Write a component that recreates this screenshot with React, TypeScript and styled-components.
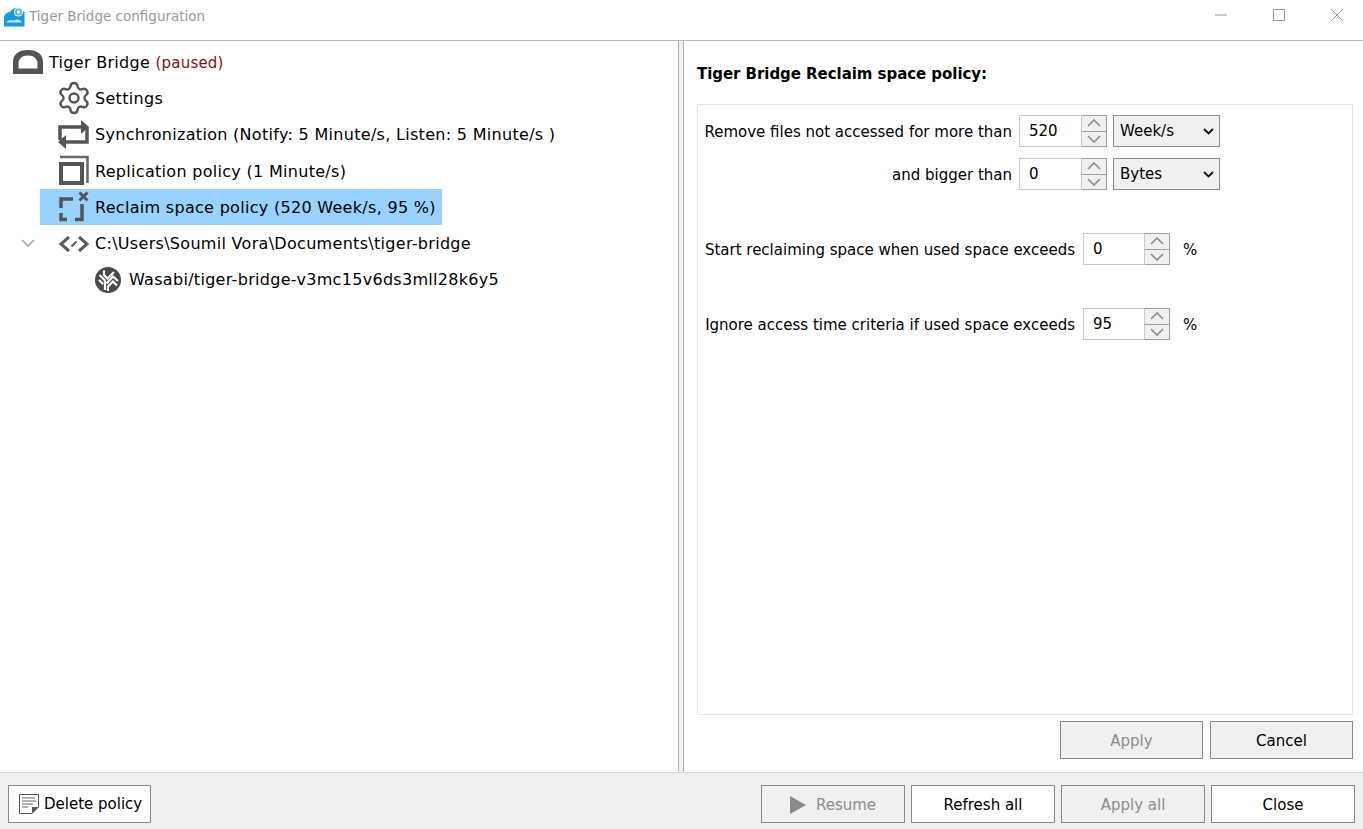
import styled, { createGlobalStyle } from "styled-components";
import { Settings } from "lucide-react";

const GlobalStyle = createGlobalStyle`
  html, body {
    margin: 0;
    padding: 0;
    background: #fff;
  }
  body {
    font-family: "DejaVu Sans", "Liberation Sans", sans-serif;
    font-size: 15px;
    color: #000;
  }
`;

function AppLogo() {
  return (
    <svg width="21" height="21" viewBox="0 0 21 21">
      <path d="M0 20.500V11C1 8 3 6 6 6C8 3 10 2 12 2L20.500 6V20.500Z" fill="#1a9ad8" />
      <path d="M2.500 16C5 13.500 7.500 13.500 9.500 14.500C12 13 15 13.500 17 15L18 16.500H2.500Z" fill="#bfe4f6" />
      <circle cx="14.500" cy="6" r="4.500" fill="#fff" />
      <circle cx="14.500" cy="6" r="2.600" fill="none" stroke="#4fb4e4" strokeWidth="1.800" />
    </svg>
  );
}

function BridgeIcon() {
  return (
    <svg width="32" height="26" viewBox="0 0 32 26">
      <path
        fillRule="evenodd"
        d="M1 25V13C1 5 7 1 16 1S31 5 31 13V25ZM6.500 19.500H25.500V14.500C25.500 10 22 6.500 16 6.500S6.500 10 6.500 14.500Z"
        fill="#545454"
      />
    </svg>
  );
}

function SyncIcon() {
  return (
    <svg width="32" height="32" viewBox="0 0 32 32" fill="none">
      <path d="M2 21V8H24" stroke="#555" strokeWidth="3.500" />
      <path d="M29 8V23H8" stroke="#555" strokeWidth="3.500" />
      <path d="M23 1L31 8L23 15Z" fill="#555" />
      <path d="M8 16L0 23L8 30Z" fill="#555" />
    </svg>
  );
}

function ReplicationIcon() {
  return (
    <svg width="32" height="32" viewBox="0 0 32 32" fill="none">
      <rect x="3" y="9" width="21" height="19" stroke="#555" strokeWidth="4" />
      <path d="M2 2H29.500V28" stroke="#666" strokeWidth="2.500" />
    </svg>
  );
}

function ReclaimIcon() {
  return (
    <svg width="32" height="32" viewBox="0 0 32 32" fill="none">
      <path d="M3 17V8H15M3 22V28.500H9M17 28.500H24V13" stroke="#555" strokeWidth="3.500" />
      <path d="M21.500 1.500L29.500 9.500M29.500 1.500L21.500 9.500" stroke="#555" strokeWidth="2.800" />
    </svg>
  );
}

function CodeIcon() {
  return (
    <svg width="32" height="20" viewBox="0 0 32 20" fill="none">
      <path d="M11 3L3 10L11 17M21 3L29 10L21 17" stroke="#5c5c5c" strokeWidth="3" />
      <path d="M13.500 12.500L18.500 7.500" stroke="#5c5c5c" strokeWidth="2.200" />
    </svg>
  );
}

function WasabiIcon() {
  return (
    <svg width="26" height="26" viewBox="0 0 26 26" fill="none">
      <circle cx="13" cy="13" r="13" fill="#4a4a4a" />
      <path
        d="M4.500 8L10 13.500V23M4 13L8 17M9 3.500V8L12.500 11.500L19 5M11.500 16.500L18 9.500L23 14M13 24V19.500L18 14.500L22 18.500"
        stroke="#fff"
        strokeWidth="2.200"
      />
    </svg>
  );
}

function Chevron() {
  return (
    <svg width="14" height="8" viewBox="0 0 14 8" fill="none">
      <path d="M1 1L7 7L13 1" stroke="#a0a0a0" strokeWidth="1.500" />
    </svg>
  );
}

function NoteIcon() {
  return (
    <svg width="20" height="20" viewBox="0 0 20 20" fill="none">
      <path d="M.5.500H19.500V13L13 19.500H.5Z" fill="#fff" stroke="#555" />
      <path d="M3 4H16M3 7H17M3 10H14M3 13H9" stroke="#666" strokeWidth="1.200" />
      <path d="M13 19.500V13H19.500Z" fill="#555" />
    </svg>
  );
}

function SpinArrow({ up }: { up?: boolean }) {
  return (
    <svg width="14" height="8" viewBox="0 0 14 8" fill="none">
      <path d={up ? "M1 7L7 1L13 7" : "M1 1L7 7L13 1"} stroke="#8c8c8c" strokeWidth="1.600" />
    </svg>
  );
}

function Spinner({ value }: { value: string }) {
  return (
    <SpinBox>
      <SpinInput readOnly value={value} />
      <SpinButtons>
        <SpinButton>
          <SpinArrow up />
        </SpinButton>
        <SpinButton>
          <SpinArrow />
        </SpinButton>
      </SpinButtons>
    </SpinBox>
  );
}

function Dropdown({ label }: { label: string }) {
  return (
    <SelectBox>
      <span>{label}</span>
      <svg width="11" height="7" viewBox="0 0 11 7" fill="none">
        <path d="M1 1L5.500 5.500L10 1" stroke="#111" strokeWidth="1.800" />
      </svg>
    </SelectBox>
  );
}

export default function App() {
  return (
    <Window>
      <GlobalStyle />
      <TitleBar>
        <AppLogo />
        <TitleText>Tiger Bridge configuration</TitleText>
        <WindowControls>
          <svg width="12" height="2" viewBox="0 0 12 2">
            <path d="M0 1H12" stroke="#999" strokeWidth="1" />
          </svg>
          <svg width="12" height="12" viewBox="0 0 12 12" fill="none">
            <rect x=".5" y=".5" width="11" height="11" stroke="#999" />
          </svg>
          <svg width="12" height="12" viewBox="0 0 12 12" fill="none">
            <path d="M0 0L12 12M12 0L0 12" stroke="#999" />
          </svg>
        </WindowControls>
      </TitleBar>
      <Main>
        <TreePanel>
          <TreeRow $indent={12}>
            <BridgeIcon />
            <span>
              Tiger Bridge <Paused>(paused)</Paused>
            </span>
          </TreeRow>
          <TreeRow $indent={58}>
            <GearIcon size={36} color="#555" strokeWidth={1.600} />
            <span>Settings</span>
          </TreeRow>
          <TreeRow $indent={58}>
            <SyncIcon />
            <span>Synchronization (Notify: 5 Minute/s, Listen: 5 Minute/s )</span>
          </TreeRow>
          <TreeRow $indent={58}>
            <ReplicationIcon />
            <span>Replication policy (1 Minute/s)</span>
          </TreeRow>
          <TreeRow $indent={58} $selected>
            <ReclaimIcon />
            <span>Reclaim space policy (520 Week/s, 95 %)</span>
          </TreeRow>
          <TreeRow $indent={58}>
            <ChevronSlot>
              <Chevron />
            </ChevronSlot>
            <CodeIcon />
            <span>C:\Users\Soumil Vora\Documents\tiger-bridge</span>
          </TreeRow>
          <TreeRow $indent={95} $gap={8}>
            <WasabiIcon />
            <span>Wasabi/tiger-bridge-v3mc15v6ds3mll28k6y5</span>
          </TreeRow>
        </TreePanel>
        <Splitter />
        <PolicyPanel>
          <PolicyTitle>Tiger Bridge Reclaim space policy:</PolicyTitle>
          <PolicyBox>
            <LimitGrid>
              <FieldLabel>Remove files not accessed for more than</FieldLabel>
              <Spinner value="520" />
              <Dropdown label="Week/s" />
              <FieldLabel>and bigger than</FieldLabel>
              <Spinner value="0" />
              <Dropdown label="Bytes" />
            </LimitGrid>
            <PercentGrid>
              <FieldLabel>Start reclaiming space when used space exceeds</FieldLabel>
              <Spinner value="0" />
              <PercentSign>%</PercentSign>
            </PercentGrid>
            <PercentGrid>
              <FieldLabel>Ignore access time criteria if used space exceeds</FieldLabel>
              <Spinner value="95" />
              <PercentSign>%</PercentSign>
            </PercentGrid>
          </PolicyBox>
          <PolicyActions>
            <ActionButton $disabled>Apply</ActionButton>
            <ActionButton>Cancel</ActionButton>
          </PolicyActions>
        </PolicyPanel>
      </Main>
      <Footer>
        <DeleteButton>
          <NoteIcon />
          Delete policy
        </DeleteButton>
        <FooterActions>
          <FooterButton $disabled>
            <PlayGlyph />
            Resume
          </FooterButton>
          <FooterButton $white>Refresh all</FooterButton>
          <FooterButton $disabled>Apply all</FooterButton>
          <FooterButton $white>Close</FooterButton>
        </FooterActions>
      </Footer>
    </Window>
  );
}

const Window = styled.div`
  display: flex;
  flex-direction: column;
  height: 829px;
  overflow: hidden;
`;

const TitleBar = styled.div`
  display: flex;
  align-items: center;
  flex: 0 0 41px;
  padding: 0 0 8px 4px;
  box-sizing: border-box;
  gap: 4px;
  border-bottom: 1px solid #bdbdbd;
`;

const TitleText = styled.span`
  font-size: 13.500px;
  color: #9a9a9a;
`;

const WindowControls = styled.div`
  display: flex;
  align-items: center;
  gap: 46px;
  margin-left: auto;
  margin-bottom: 3px;
  padding-right: 20px;
`;

const Main = styled.div`
  display: flex;
  flex: 1;
  min-height: 0;
`;

const TreePanel = styled.div`
  flex: 0 0 678px;
  padding-top: 3px;
  font-size: 16px;
  letter-spacing: 0.3px;
  border-right: 1px solid #b4b4b4;
`;

const TreeRow = styled.div<{ $indent: number; $gap?: number; $selected?: boolean }>`
  position: relative;
  display: flex;
  align-items: center;
  width: fit-content;
  height: 36.3px;
  gap: ${({ $gap }) => $gap ?? 5}px;
  white-space: nowrap;
  margin-left: ${({ $indent, $selected }) => ($selected ? 40 : $indent)}px;
  padding-left: ${({ $selected }) => ($selected ? 18 : 0)}px;
  padding-right: ${({ $selected }) => ($selected ? 6 : 0)}px;
  background: ${({ $selected }) => ($selected ? "#99d1ff" : "transparent")};
`;

const GearIcon = styled(Settings)`
  margin: -2px;
`;

const Paused = styled.span`
  font-size: 15px;
  letter-spacing: 0.2px;
  color: #7f1010;
`;

const ChevronSlot = styled.span`
  position: absolute;
  left: -37px;
  top: 14px;
  display: flex;
`;

const Splitter = styled.div`
  flex: 0 0 4px;
  background: #f0f0f0;
`;

const PolicyPanel = styled.div`
  display: flex;
  flex: 1;
  flex-direction: column;
  min-width: 0;
  padding: 24px 10px 13px 13px;
  border-left: 1px solid #b4b4b4;
`;

const PolicyTitle = styled.div`
  height: 39px;
  font-weight: 700;
  letter-spacing: -0.05px;
`;

const PolicyBox = styled.div`
  flex: 1;
  padding: 10px 6px;
  border: 1px solid #e3e3e3;
`;

const FieldLabel = styled.span`
  padding-top: 1px;
  text-align: right;
  white-space: nowrap;
`;

const LimitGrid = styled.div`
  display: grid;
  grid-template-columns: 309px 88px 107px;
  column-gap: 6px;
  row-gap: 11px;
  align-items: center;
  margin-bottom: 43px;

  ${FieldLabel} {
    margin-right: 1px;
  }
`;

const PercentGrid = styled.div`
  display: grid;
  grid-template-columns: 371px 87px auto;
  column-gap: 8px;
  align-items: center;
  margin-bottom: 43px;
`;

const PercentSign = styled.span`
  margin-left: 5px;
  padding-top: 2px;
`;

const SpinBox = styled.div`
  display: flex;
  height: 32px;
`;

const SpinInput = styled.input`
  flex: 1;
  min-width: 0;
  padding: 0 0 0 9px;
  box-sizing: border-box;
  border: 1px solid #c8c8c8;
  font: inherit;
  outline: none;
`;

const SpinButtons = styled.div`
  display: flex;
  flex: 0 0 25px;
  flex-direction: column;
  box-sizing: border-box;
  border: 1px solid #a0a0a0;
  border-left: none;
  background: #f0f0f0;
`;

const SpinButton = styled.span`
  display: flex;
  flex: 1;
  align-items: center;
  justify-content: center;

  & + & {
    border-top: 1px solid #a0a0a0;
  }
`;

const SelectBox = styled.div`
  display: flex;
  align-items: center;
  justify-content: space-between;
  height: 32px;
  padding: 0 5px 0 6px;
  box-sizing: border-box;
  border: 1px solid #8c8c8c;
  background: #f0f0f0;
`;

const PolicyActions = styled.div`
  display: flex;
  justify-content: flex-end;
  gap: 7px;
  padding-top: 6px;
`;

const ActionButton = styled.div<{ $disabled?: boolean; $white?: boolean }>`
  display: flex;
  align-items: center;
  justify-content: center;
  gap: 10px;
  width: 143px;
  height: 38px;
  padding-top: 1px;
  box-sizing: border-box;
  border: 1px solid #8a8a8a;
  background: ${({ $white }) => ($white ? "#fff" : "#f0f0f0")};
  color: ${({ $disabled }) => ($disabled ? "#8c8c8c" : "#000")};
`;

const FooterButton = styled(ActionButton)`
  width: 144px;
`;

const PlayGlyph = styled.span`
  width: 0;
  height: 0;
  border-top: 9px solid transparent;
  border-bottom: 9px solid transparent;
  border-left: 16px solid #8a8a8a;
`;

const Footer = styled.div`
  display: flex;
  align-items: flex-start;
  justify-content: space-between;
  flex: 0 0 57px;
  padding: 12px 8px 0;
  box-sizing: border-box;
  border-top: 1px solid #d6d6d6;
  background: #f0f0f0;
`;

const DeleteButton = styled.div`
  display: flex;
  align-items: center;
  gap: 5px;
  width: 143px;
  height: 38px;
  padding-left: 10px;
  box-sizing: border-box;
  border: 1px solid #8a8a8a;
  background: #fff;
`;

const FooterActions = styled.div`
  display: flex;
  gap: 6px;
`;
